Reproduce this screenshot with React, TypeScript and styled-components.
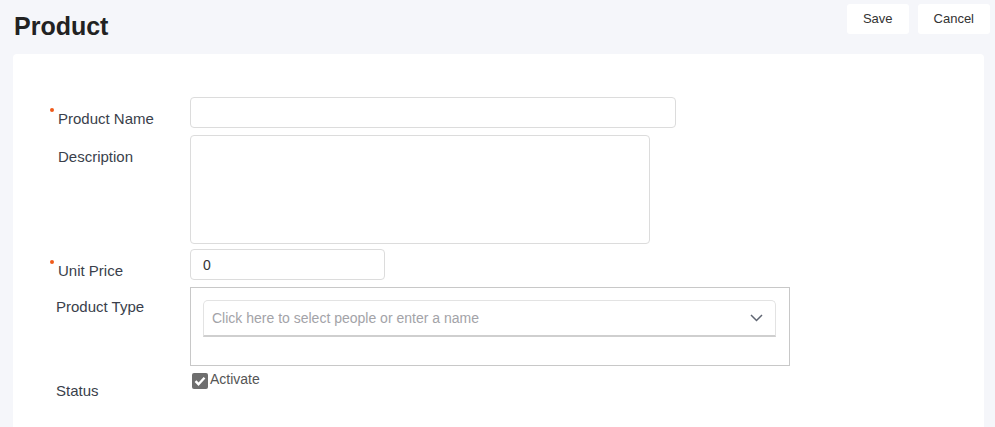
import styled, { createGlobalStyle } from "styled-components";

const GlobalStyle = createGlobalStyle`
    html, body {
        margin: 0;
        padding: 0;
        background-color: #f5f6fa;
        font-family: "Liberation Sans", Arial, sans-serif;
    }
    * {
        box-sizing: border-box;
    }
`;

const Page = styled.div`
    padding: 0 5px 0 13px;
    min-height: 100vh;
`;

const Header = styled.header`
    display: flex;
    justify-content: space-between;
    align-items: flex-start;
    height: 54px;
`;

const Title = styled.h1`
    margin: 11px 0 0 1px;
    font-size: 25px;
    line-height: 30px;
    font-weight: bold;
    color: #222;
`;

const Actions = styled.div`
    display: flex;
    gap: 9px;
    margin-top: 4px;
`;

const Button = styled.button`
    height: 30px;
    padding: 0 16px 1px;
    border: none;
    border-radius: 3px;
    background-color: #fff;
    font-family: inherit;
    font-size: 13px;
    color: #333;
    cursor: pointer;
`;

const Card = styled.main`
    margin-right: 6px;
    background-color: #fff;
    border-radius: 4px;
    padding: 43px 37px 40px;
    display: flex;
    flex-direction: column;
    gap: 5px;
`;

const Row = styled.div<{ $gap?: number }>`
    display: flex;
    align-items: flex-start;
    margin-bottom: ${(p) => p.$gap ?? 0}px;
`;

const Label = styled.label<{ $indent?: number; $top?: number }>`
    width: 140px;
    height: 31px;
    flex-shrink: 0;
    padding-top: ${(p) => p.$top ?? 13}px;
    padding-left: ${(p) => p.$indent ?? 8}px;
    font-size: 15px;
    line-height: 18px;
    color: #3a3f4b;
`;

const Dot = styled.span`
    display: inline-block;
    width: 4px;
    height: 4px;
    border-radius: 50%;
    background-color: #f05a1a;
    margin: -2px 4px 0 0;
    vertical-align: top;
`;

const TextInput = styled.input<{ $width: number }>`
    width: ${(p) => p.$width}px;
    height: 31px;
    padding: 0 12px;
    border: 1px solid #dcdcdc;
    border-radius: 4px;
    font-family: inherit;
    font-size: 14px;
    color: #333;
    outline: none;
`;

const TextArea = styled.textarea`
    width: 460px;
    height: 109px;
    padding: 8px 12px;
    border: 1px solid #dcdcdc;
    border-radius: 4px;
    font-family: inherit;
    font-size: 14px;
    resize: none;
    outline: none;
`;

const PickerBox = styled.div`
    width: 600px;
    height: 79px;
    border: 1px solid #c8c8c8;
    padding: 12px 13px 0 12px;
`;

const Select = styled.div`
    height: 37px;
    display: flex;
    align-items: center;
    justify-content: space-between;
    padding: 0 12px 1px 8px;
    border: 1px solid #e3e3e3;
    border-bottom: 2px solid #cfcfcf;
    border-radius: 5px 5px 0 0;
    font-size: 14px;
    color: #a3a3a8;
    cursor: pointer;
`;

const CheckRow = styled.div`
    display: flex;
    align-items: flex-start;
    gap: 2px;
    margin-top: 2px;
    margin-left: 2px;
`;

const CheckBox = styled.span`
    width: 16px;
    height: 16px;
    border-radius: 2px;
    background-color: #6e6e6e;
    display: flex;
    align-items: center;
    justify-content: center;
`;

const CheckText = styled.span`
    font-size: 14px;
    line-height: 13px;
    color: #555;
`;

export default function App() {
    return (
        <>
            <GlobalStyle />
            <Page>
                <Header>
                    <Title>Product</Title>
                    <Actions>
                        <Button>Save</Button>
                        <Button>Cancel</Button>
                    </Actions>
                </Header>

                <Card>
                    <Row $gap={2}>
                        <Label $indent={0}>
                            <Dot />
                            Product Name
                        </Label>
                        <TextInput $width={486} />
                    </Row>

                    <Row>
                        <Label>Description</Label>
                        <TextArea />
                    </Row>

                    <Row $gap={2}>
                        <Label $indent={0}>
                            <Dot />
                            Unit Price
                        </Label>
                        <TextInput $width={195} defaultValue="0" />
                    </Row>

                    <Row>
                        <Label $indent={6} $top={11}>Product Type</Label>
                        <PickerBox>
                            <Select>
                                Click here to select people or enter a name
                                <svg width="13" height="8" viewBox="0 0 13 8" fill="none">
                                    <path d="M1 1l5.5 5.5L12 1" stroke="#5f6572" strokeWidth="1.5" />
                                </svg>
                            </Select>
                        </PickerBox>
                    </Row>

                    <Row>
                        <Label $indent={6} $top={11}>Status</Label>
                        <CheckRow>
                            <CheckBox>
                                <svg width="12" height="10" viewBox="0 0 12 10" fill="none">
                                    <path d="M1.5 5.2l3 3L10.5 1.8" stroke="#fff" strokeWidth="2.4" />
                                </svg>
                            </CheckBox>
                            <CheckText>Activate</CheckText>
                        </CheckRow>
                    </Row>
                </Card>
            </Page>
        </>
    );
}
